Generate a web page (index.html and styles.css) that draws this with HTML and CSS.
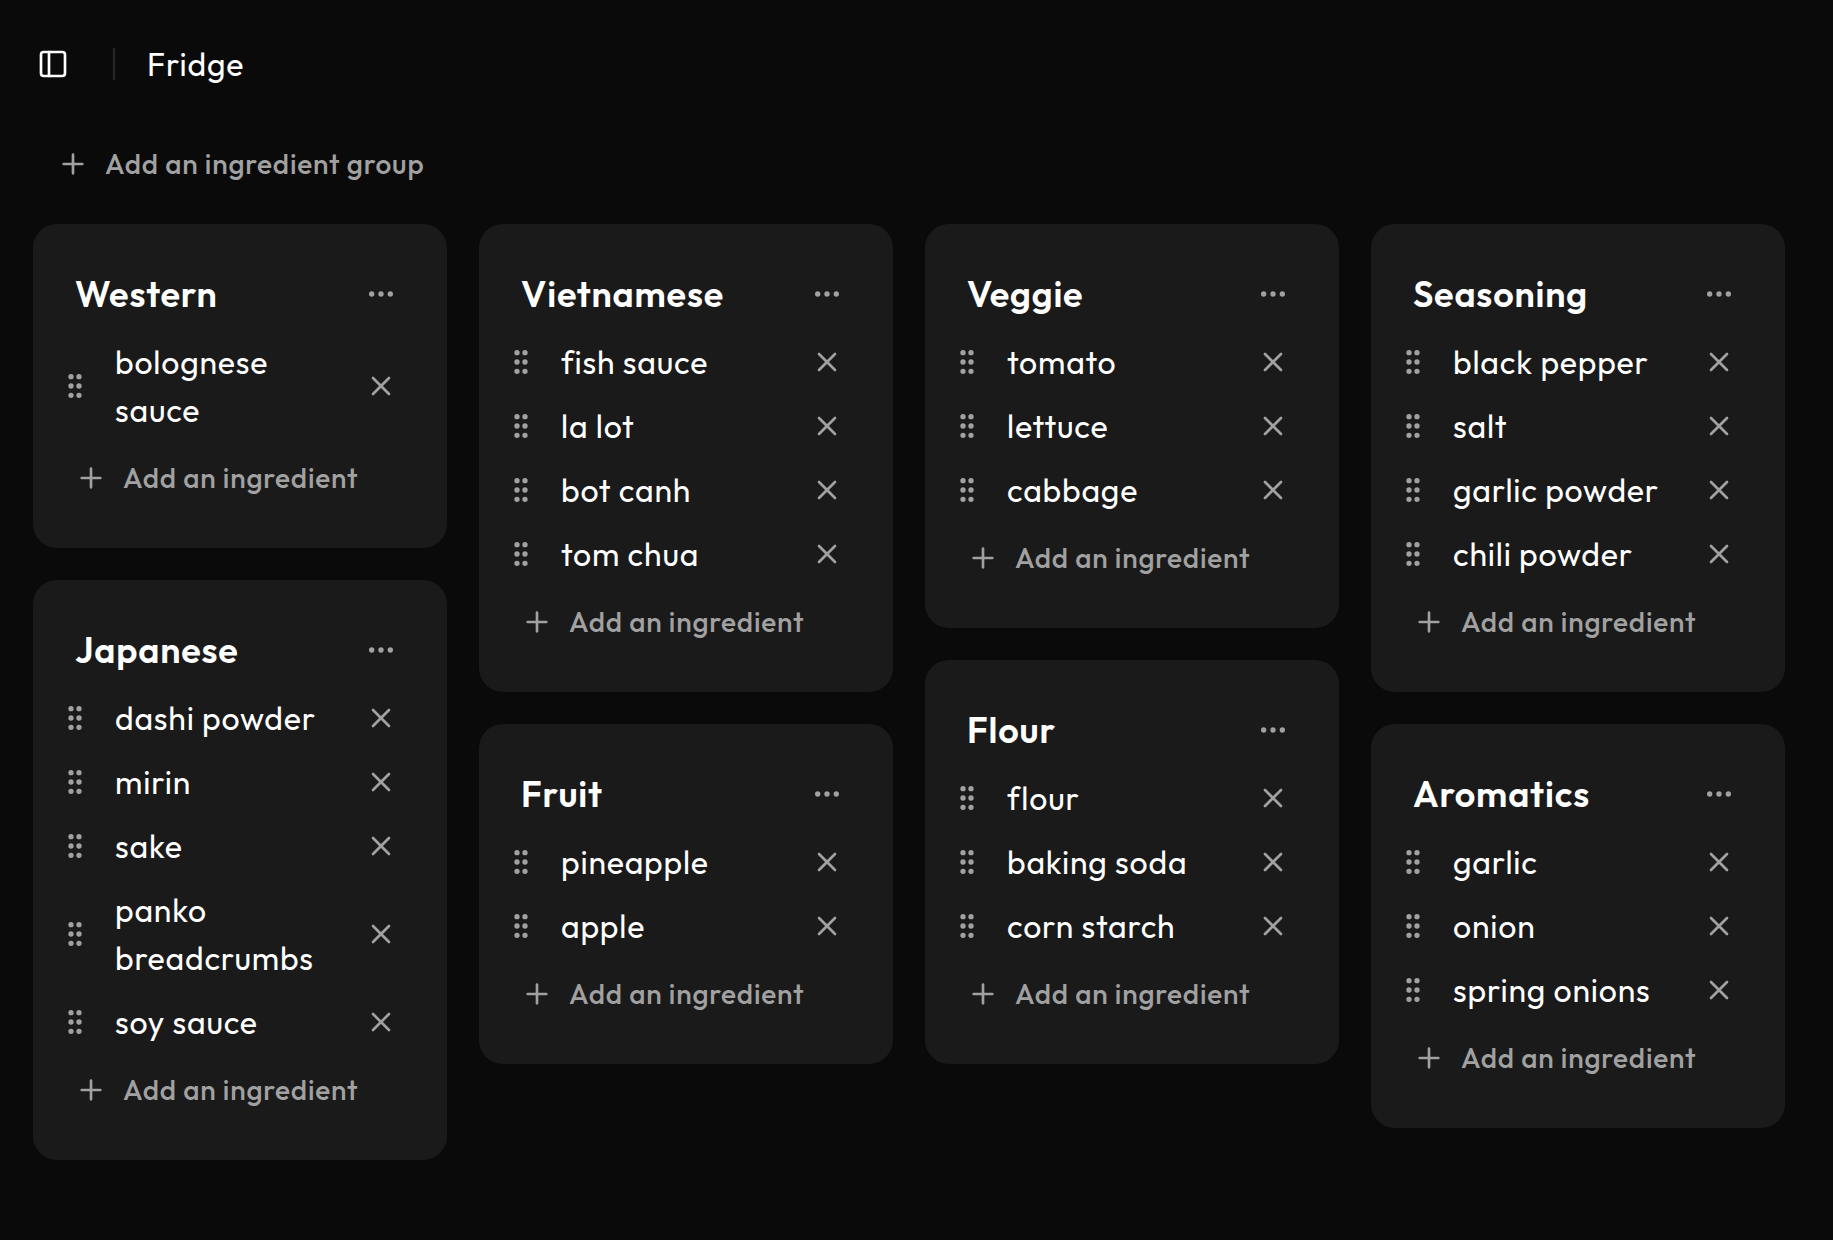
FILE: index.html
```
<!DOCTYPE html>
<html lang="en">
<head>
<meta charset="utf-8">
<title>Fridge</title>
<link rel="stylesheet" href="styles.css">
</head>
<body>
<svg class="sprite" aria-hidden="true">
  <symbol id="panel" viewBox="0 0 24 24"><rect width="18" height="18" x="3" y="3" rx="2"/><path d="M9 3v18"/></symbol>
  <symbol id="plus" viewBox="0 0 24 24"><path d="M5 12h14M12 5v14"/></symbol>
  <symbol id="x" viewBox="0 0 24 24"><path d="M18 6 6 18M6 6l12 12"/></symbol>
  <symbol id="more" viewBox="0 0 24 24"><circle cx="12" cy="12" r="1"/><circle cx="19" cy="12" r="1"/><circle cx="5" cy="12" r="1"/></symbol>
  <symbol id="grip" viewBox="0 0 24 24"><circle cx="9" cy="12" r="1"/><circle cx="9" cy="5" r="1"/><circle cx="9" cy="19" r="1"/><circle cx="15" cy="12" r="1"/><circle cx="15" cy="5" r="1"/><circle cx="15" cy="19" r="1"/></symbol>
</svg>

<header class="topbar">
  <svg class="icon toggle"><use href="#panel"/></svg>
  <span class="divider"></span>
  <h1 class="page-title">Fridge</h1>
</header>

<button class="add add-group"><svg class="icon"><use href="#plus"/></svg>Add an ingredient group</button>

<main class="board">
  <div class="column">
    <section class="card">
      <div class="card-head"><h2 class="card-title">Western</h2><svg class="icon"><use href="#more"/></svg></div>
      <ul class="items">
        <li class="item"><svg class="icon"><use href="#grip"/></svg><span class="name">bolognese sauce</span><svg class="icon"><use href="#x"/></svg></li>
      </ul>
      <button class="add"><svg class="icon"><use href="#plus"/></svg>Add an ingredient</button>
    </section>
    <section class="card">
      <div class="card-head"><h2 class="card-title">Japanese</h2><svg class="icon"><use href="#more"/></svg></div>
      <ul class="items">
        <li class="item"><svg class="icon"><use href="#grip"/></svg><span class="name">dashi powder</span><svg class="icon"><use href="#x"/></svg></li>
        <li class="item"><svg class="icon"><use href="#grip"/></svg><span class="name">mirin</span><svg class="icon"><use href="#x"/></svg></li>
        <li class="item"><svg class="icon"><use href="#grip"/></svg><span class="name">sake</span><svg class="icon"><use href="#x"/></svg></li>
        <li class="item"><svg class="icon"><use href="#grip"/></svg><span class="name">panko breadcrumbs</span><svg class="icon"><use href="#x"/></svg></li>
        <li class="item"><svg class="icon"><use href="#grip"/></svg><span class="name">soy sauce</span><svg class="icon"><use href="#x"/></svg></li>
      </ul>
      <button class="add"><svg class="icon"><use href="#plus"/></svg>Add an ingredient</button>
    </section>
  </div>

  <div class="column">
    <section class="card">
      <div class="card-head"><h2 class="card-title">Vietnamese</h2><svg class="icon"><use href="#more"/></svg></div>
      <ul class="items">
        <li class="item"><svg class="icon"><use href="#grip"/></svg><span class="name">fish sauce</span><svg class="icon"><use href="#x"/></svg></li>
        <li class="item"><svg class="icon"><use href="#grip"/></svg><span class="name">la lot</span><svg class="icon"><use href="#x"/></svg></li>
        <li class="item"><svg class="icon"><use href="#grip"/></svg><span class="name">bot canh</span><svg class="icon"><use href="#x"/></svg></li>
        <li class="item"><svg class="icon"><use href="#grip"/></svg><span class="name">tom chua</span><svg class="icon"><use href="#x"/></svg></li>
      </ul>
      <button class="add"><svg class="icon"><use href="#plus"/></svg>Add an ingredient</button>
    </section>
    <section class="card">
      <div class="card-head"><h2 class="card-title">Fruit</h2><svg class="icon"><use href="#more"/></svg></div>
      <ul class="items">
        <li class="item"><svg class="icon"><use href="#grip"/></svg><span class="name">pineapple</span><svg class="icon"><use href="#x"/></svg></li>
        <li class="item"><svg class="icon"><use href="#grip"/></svg><span class="name">apple</span><svg class="icon"><use href="#x"/></svg></li>
      </ul>
      <button class="add"><svg class="icon"><use href="#plus"/></svg>Add an ingredient</button>
    </section>
  </div>

  <div class="column">
    <section class="card">
      <div class="card-head"><h2 class="card-title">Veggie</h2><svg class="icon"><use href="#more"/></svg></div>
      <ul class="items">
        <li class="item"><svg class="icon"><use href="#grip"/></svg><span class="name">tomato</span><svg class="icon"><use href="#x"/></svg></li>
        <li class="item"><svg class="icon"><use href="#grip"/></svg><span class="name">lettuce</span><svg class="icon"><use href="#x"/></svg></li>
        <li class="item"><svg class="icon"><use href="#grip"/></svg><span class="name">cabbage</span><svg class="icon"><use href="#x"/></svg></li>
      </ul>
      <button class="add"><svg class="icon"><use href="#plus"/></svg>Add an ingredient</button>
    </section>
    <section class="card">
      <div class="card-head"><h2 class="card-title">Flour</h2><svg class="icon"><use href="#more"/></svg></div>
      <ul class="items">
        <li class="item"><svg class="icon"><use href="#grip"/></svg><span class="name">flour</span><svg class="icon"><use href="#x"/></svg></li>
        <li class="item"><svg class="icon"><use href="#grip"/></svg><span class="name">baking soda</span><svg class="icon"><use href="#x"/></svg></li>
        <li class="item"><svg class="icon"><use href="#grip"/></svg><span class="name">corn starch</span><svg class="icon"><use href="#x"/></svg></li>
      </ul>
      <button class="add"><svg class="icon"><use href="#plus"/></svg>Add an ingredient</button>
    </section>
  </div>

  <div class="column">
    <section class="card">
      <div class="card-head"><h2 class="card-title">Seasoning</h2><svg class="icon"><use href="#more"/></svg></div>
      <ul class="items">
        <li class="item"><svg class="icon"><use href="#grip"/></svg><span class="name">black pepper</span><svg class="icon"><use href="#x"/></svg></li>
        <li class="item"><svg class="icon"><use href="#grip"/></svg><span class="name">salt</span><svg class="icon"><use href="#x"/></svg></li>
        <li class="item"><svg class="icon"><use href="#grip"/></svg><span class="name">garlic powder</span><svg class="icon"><use href="#x"/></svg></li>
        <li class="item"><svg class="icon"><use href="#grip"/></svg><span class="name">chili powder</span><svg class="icon"><use href="#x"/></svg></li>
      </ul>
      <button class="add"><svg class="icon"><use href="#plus"/></svg>Add an ingredient</button>
    </section>
    <section class="card">
      <div class="card-head"><h2 class="card-title">Aromatics</h2><svg class="icon"><use href="#more"/></svg></div>
      <ul class="items">
        <li class="item"><svg class="icon"><use href="#grip"/></svg><span class="name">garlic</span><svg class="icon"><use href="#x"/></svg></li>
        <li class="item"><svg class="icon"><use href="#grip"/></svg><span class="name">onion</span><svg class="icon"><use href="#x"/></svg></li>
        <li class="item"><svg class="icon"><use href="#grip"/></svg><span class="name">spring onions</span><svg class="icon"><use href="#x"/></svg></li>
      </ul>
      <button class="add"><svg class="icon"><use href="#plus"/></svg>Add an ingredient</button>
    </section>
  </div>
</main>
</body>
</html>
```
FILE: styles.css
```
* { box-sizing: border-box; margin: 0; padding: 0; }

body {
  min-height: 1240px;
  padding: 32px 48px 32px 33px;
  background: #0a0a0a;
  color: #fff;
  font: 400 32px/48px Outfit, Lato, sans-serif;
  letter-spacing: 0.8px;
}

.sprite { display: none; }

.icon {
  flex: none;
  width: 32px;
  height: 32px;
  fill: none;
  stroke: #a1a1a1;
  stroke-width: 2;
  stroke-linecap: round;
  stroke-linejoin: round;
}

.topbar {
  display: flex;
  align-items: center;
  height: 64px;
  padding-left: 4px;
}
.toggle { stroke: #fff; }
.divider {
  width: 2px;
  height: 32px;
  margin: 0 32px 0 44px;
  background: #272727;
}
.page-title { font-size: 32px; font-weight: 400; }

.add {
  display: flex;
  align-items: center;
  gap: 16px;
  height: 72px;
  padding-left: 8px;
  border: 0;
  background: none;
  color: #a1a1a1;
  font: 500 28px/40px Outfit, Lato, sans-serif;
  letter-spacing: 0.8px;
  white-space: nowrap;
}
.add-group { margin: 32px 0 24px 16px; }

.board {
  display: grid;
  grid-template-columns: repeat(4, 414px);
  gap: 32px;
  align-items: start;
}
.column { display: flex; flex-direction: column; gap: 32px; }

.card {
  padding: 34px;
  border-radius: 24px;
  background: #1a1a1a;
}
.card-head {
  display: flex;
  align-items: center;
  justify-content: space-between;
  height: 72px;
  padding: 0 16px 0 8px;
}
.card-title { font-size: 36px; font-weight: 600; }

.items { list-style: none; }
.item {
  display: flex;
  align-items: center;
  gap: 24px;
  padding: 8px 16px 8px 0;
  margin-left: -8px;
}
.name { flex: 1; }
```
